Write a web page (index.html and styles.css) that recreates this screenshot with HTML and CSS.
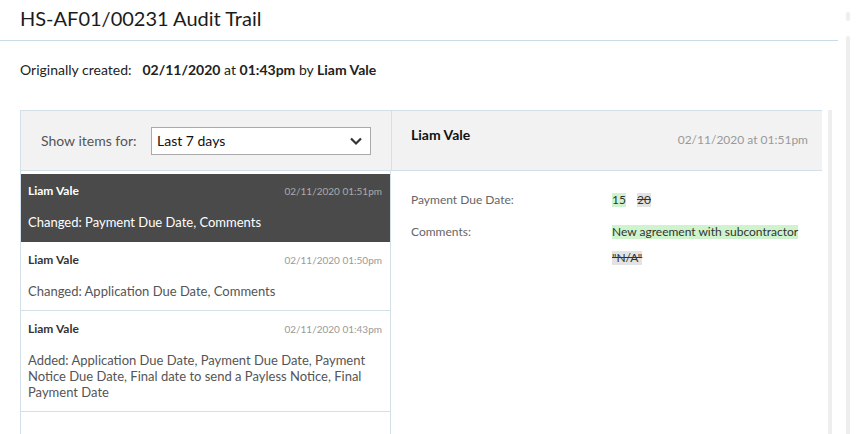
FILE: index.html
```html
<!DOCTYPE html>
<html>
<head>
<meta charset="utf-8">
<link rel="stylesheet" href="styles.css">
</head>
<body>
<div class="page">
  <div class="main">
    <header class="title-bar"><h1>HS-AF01/00231 Audit Trail</h1></header>
    <p class="created"><span class="created-label">Originally created:</span><b>02/11/2020</b> at <b>01:43pm</b> by <b>Liam Vale</b></p>
    <div class="panel-wrap">
      <div class="panel">
        <div class="filter">
          <span class="filter-label">Show items for:</span>
          <div class="select"><span>Last 7 days</span>
            <svg width="14" height="10" viewBox="0 0 14 10"><path d="M2 2.5 L7 7.5 L12 2.5" fill="none" stroke="#333" stroke-width="2.2"/></svg>
          </div>
        </div>
        <div class="detail-head">
          <span class="dh-name">Liam Vale</span>
          <span class="dh-date">02/11/2020 at 01:51pm</span>
        </div>
        <div class="list">
          <div class="item active">
            <div class="item-top"><span class="item-name">Liam Vale</span><span class="item-date">02/11/2020 01:51pm</span></div>
            <div class="item-desc">Changed: Payment Due Date, Comments</div>
          </div>
          <div class="item">
            <div class="item-top"><span class="item-name">Liam Vale</span><span class="item-date">02/11/2020 01:50pm</span></div>
            <div class="item-desc">Changed: Application Due Date, Comments</div>
          </div>
          <div class="item">
            <div class="item-top"><span class="item-name">Liam Vale</span><span class="item-date">02/11/2020 01:43pm</span></div>
            <div class="item-desc">Added: Application Due Date, Payment Due Date, Payment Notice Due Date, Final date to send a Payless Notice, Final Payment Date</div>
          </div>
        </div>
        <div class="detail">
          <div class="row">
            <span class="label">Payment Due Date:</span>
            <span class="value"><span class="new">15</span><span class="old">20</span></span>
          </div>
          <div class="row">
            <span class="label">Comments:</span>
            <span class="value col"><span class="new">New agreement with subcontractor</span><span class="old">"N/A"</span></span>
          </div>
        </div>
      </div>
      <div class="inner-scroll"></div>
    </div>
  </div>
  <div class="page-scroll">
    <div class="thumb"></div>
    <div class="track"></div>
  </div>
</div>
</body>
</html>
```
FILE: styles.css
```css
* { box-sizing: border-box; }
html, body { margin: 0; padding: 0; }
body {
  font-family: Lato, "Open Sans", sans-serif;
  color: #222;
  background: #fff;
  width: 860px;
  height: 434px;
  overflow: hidden;
}
.page { display: flex; height: 434px; }
.main { width: 838px; }
.title-bar {
  height: 41px;
  border-bottom: 1px solid #c9dde7;
  padding: 0 20px;
}
.title-bar h1 {
  margin: 0;
  font-size: 20px;
  font-weight: 400;
  line-height: 36px;
  color: #1b1b1b;
}
.created {
  margin: 0;
  padding: 20px 20px 0;
  height: 69px;
  font-size: 14px;
  line-height: 18px;
  color: #222;
}
.created-label { margin-right: 11px; }
.created b { font-weight: 700; }
.panel-wrap { display: flex; margin-left: 20px; }
.panel {
  width: 802px;
  display: grid;
  grid-template-columns: 371px 431px;
  grid-template-rows: 61px auto;
}
.filter {
  background: #f2f2f2;
  border: 1px solid #d3e0e8;
  border-right: none;
  display: flex;
  align-items: center;
  padding-left: 20px;
  padding-top: 0;
}
.filter-label { font-size: 14px; color: #555; width: 110px; }
.select {
  width: 220px;
  height: 28px;
  background: #fff;
  border: 1px solid #aaa;
  display: flex;
  align-items: center;
  justify-content: space-between;
  padding: 0 7px 0 5px;
  font-size: 14px;
  color: #111;
}
.select svg { display: block; }
.detail-head {
  background: #f2f2f2;
  border-top: 1px solid #d3e0e8;
  border-bottom: 1px solid #d3e0e8;
  border-left: 1px solid #d3e0e8;
  display: flex;
  justify-content: space-between;
  align-items: flex-start;
  padding: 15px 14px 0 19px;
}
.dh-name { font-size: 14px; font-weight: 700; color: #111; }
.dh-date { font-size: 12px; color: #999; padding-top: 6px; }
.list {
  border-left: 1px solid #d3e0e8;
  border-right: 1px solid #d3e0e8;
  padding-top: 3px;
  height: 264px;
}
.item {
  border-bottom: 1px solid #d3e0e8;
  padding: 9px 8px 9px 7px;
}
.item.active {
  background: #4a4a4a;
  border-bottom: none;
  height: 68px;
  color: #fff;
}
.item-top { display: flex; justify-content: space-between; align-items: baseline; height: 18px; }
.item-name { font-size: 12px; font-weight: 700; color: #333; }
.item.active .item-name { color: #fff; }
.item-date { font-size: 10px; color: #999; }
.item.active .item-date { color: #aaa; }
.item-desc {
  margin-top: 13px;
  font-size: 13px;
  line-height: 16px;
  color: #555;
}
.item.active .item-desc { color: #fff; margin-top: 13px; }
.item:nth-child(2) { height: 69px; padding-top: 10px; }
.item:nth-child(3) { height: 101px; padding-top: 10px; }
.detail { padding: 19px 20px 0 20px; }
.row { display: flex; font-size: 12px; margin-bottom: 12px; }
.label { width: 201px; color: #666; line-height: 20px; }
.value { display: flex; gap: 11px; align-items: flex-start; color: #333; line-height: 20px; }
.value.col { flex-direction: column; gap: 9px; }
.new { background: #cff3cc; line-height: 14px; margin-top: 3px; }
.old { background: #e3e3e3; text-decoration: line-through; line-height: 14px; margin-top: 3px; }
.inner-scroll {
  width: 4px;
  margin-left: 6px;
  background: #eeeeee;
  height: 324px;
}
.page-scroll {
  width: 22px;
  display: flex;
  flex-direction: column;
  padding-left: 8px;
}
.thumb { width: 4px; height: 9px; background: #eee; border-radius: 2px; margin-top: 12px; }
.track { width: 4px; flex: 1; background: #eee; margin-top: 15px; border-radius: 2px 2px 0 0; }
```
